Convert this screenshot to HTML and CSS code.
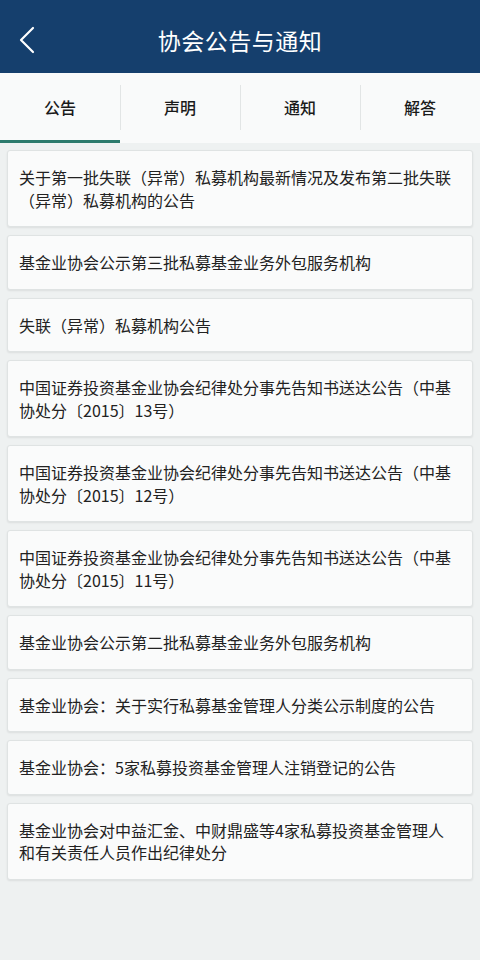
FILE: index.html
```html
<!DOCTYPE html>
<html lang="zh-CN">
<head>
<meta charset="utf-8">
<title>协会公告与通知</title>
<link rel="stylesheet" href="styles.css">
</head>
<body>
<header class="topbar">
  <svg class="back" width="18" height="28" viewBox="0 0 18 28"><path d="M15 2 L3 14 L15 26" fill="none" stroke="#fff" stroke-width="2.2" stroke-linecap="round" stroke-linejoin="round"/></svg>
  <h1 class="title">协会公告与通知</h1>
</header>
<nav class="tabs">
  <div class="tab active">公告</div>
  <div class="tab">声明</div>
  <div class="tab">通知</div>
  <div class="tab">解答</div>
</nav>
<main class="list">
  <div class="card">关于第一批失联（异常）私募机构最新情况及发布第二批失联（异常）私募机构的公告</div>
  <div class="card">基金业协会公示第三批私募基金业务外包服务机构</div>
  <div class="card">失联（异常）私募机构公告</div>
  <div class="card">中国证券投资基金业协会纪律处分事先告知书送达公告（中基协处分〔2015〕13号）</div>
  <div class="card">中国证券投资基金业协会纪律处分事先告知书送达公告（中基协处分〔2015〕12号）</div>
  <div class="card">中国证券投资基金业协会纪律处分事先告知书送达公告（中基协处分〔2015〕11号）</div>
  <div class="card">基金业协会公示第二批私募基金业务外包服务机构</div>
  <div class="card">基金业协会：关于实行私募基金管理人分类公示制度的公告</div>
  <div class="card">基金业协会：5家私募投资基金管理人注销登记的公告</div>
  <div class="card">基金业协会对中益汇金、中财鼎盛等4家私募投资基金管理人和有关责任人员作出纪律处分</div>
</main>
</body>
</html>
```

FILE: styles.css
```css
* { box-sizing: border-box; }
html, body { margin: 0; padding: 0; }
body {
  width: 480px;
  min-height: 960px;
  background: #eef1f1;
  font-family: "Noto Sans CJK SC", "Noto Sans", sans-serif;
  color: #222;
}
.topbar {
  height: 73px;
  background: #153f6d;
  display: flex;
  align-items: center;
  position: relative;
  padding-left: 18px;
}
.back { display: block; margin-top: 6px; }
.title {
  margin: 0;
  position: absolute;
  left: 0; right: 0; top: 0;
  height: 73px;
  line-height: 80px;
  text-align: center;
  font-size: 23px;
  font-weight: 400;
  color: #fff;
  letter-spacing: 0.5px;
  pointer-events: none;
}
.tabs {
  display: flex;
  height: 70px;
  background: #f9fafa;
}
.tab {
  flex: 1;
  position: relative;
  display: flex;
  align-items: center;
  justify-content: center;
  font-size: 16px;
  font-weight: 500;
  color: #1a1a1a;
  border-bottom: 3px solid transparent;
}
.tab + .tab::before {
  content: "";
  position: absolute;
  left: 0;
  top: 12px;
  bottom: 10px;
  width: 1px;
  background: #e2e5e5;
}
.tab.active { border-bottom-color: #2b7a6c; }
.list {
  padding: 7px 7px 20px;
  display: flex;
  flex-direction: column;
  gap: 8px;
}
.card {
  background: #fafbfb;
  border: 1px solid #dfe3e3;
  border-radius: 3px;
  box-shadow: 0 1px 2px rgba(0,0,0,0.08);
  padding: 15px 18px 15px 11px;
  font-size: 16px;
  line-height: 22.5px;
  color: #222;
}
```
